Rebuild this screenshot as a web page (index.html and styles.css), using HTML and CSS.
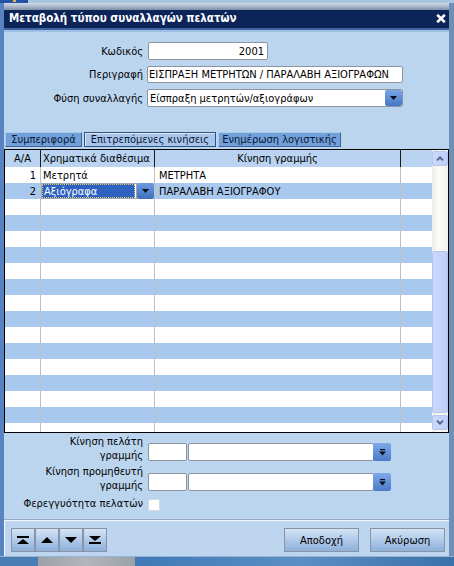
FILE: index.html
```html
<!DOCTYPE html>
<html lang="el">
<head>
<meta charset="utf-8">
<title>Μεταβολή τύπου συναλλαγών πελατών</title>
<link rel="stylesheet" href="styles.css">
</head>
<body>
<div class="screen">
  <div class="desk-top"><div class="dk"><span class="dot"></span></div></div>
  <div class="window">
    <div class="titlebar">
      <span class="title">Μεταβολή τύπου συναλλαγών πελατών</span>
      <svg class="close" width="10" height="9" viewBox="0 0 10 9"><path d="M1.2 0.8L8.8 8.2M8.8 0.8L1.2 8.2" stroke="#fff" stroke-width="2.6" fill="none"/></svg>
    </div>
    <div class="client">
      <div class="form">
        <span class="lbl">Κωδικός</span>
        <div class="box code">2001</div>
        <span class="lbl">Περιγραφή</span>
        <div class="box desc">ΕΙΣΠΡΑΞΗ ΜΕΤΡΗΤΩΝ / ΠΑΡΑΛΑΒΗ ΑΞΙΟΓΡΑΦΩΝ</div>
        <span class="lbl">Φύση συναλλαγής</span>
        <div class="box combo"><span class="txt">Είσπραξη μετρητών/αξιογράφων</span><span class="dd"><svg width="7" height="4" viewBox="0 0 7 4"><path d="M0 0H7L3.5 4Z" fill="#0a0f1e"/></svg></span></div>
      </div>

      <div class="tabs">
        <div class="tab t1">Συμπεριφορά</div>
        <div class="tab t2">Επιτρεπόμενες κινήσεις</div>
        <div class="tab t3">Ενημέρωση λογιστικής</div>
      </div>

      <div class="grid">
        <div class="gmain">
          <div class="ghead">
            <div class="c c1 center">Α/Α</div>
            <div class="c c2">Χρηματικά διαθέσιμα</div>
            <div class="c c3 center">Κίνηση γραμμής</div>
            <div class="c c4"></div>
          </div>
          <div class="gbody">
            <div class="grow"><div class="c c1">1</div><div class="c c2">Μετρητά</div><div class="c c3">ΜΕΤΡΗΤΑ</div><div class="c c4"></div></div>
            <div class="grow alt"><div class="c c1">2</div><div class="c c2 editing"><div class="editor"><span class="sel">Αξιόγραφα</span></div><span class="ebtn"><svg width="7" height="4" viewBox="0 0 7 4"><path d="M0 0H7L3.5 4Z" fill="#0a0f1e"/></svg></span></div><div class="c c3">ΠΑΡΑΛΑΒΗ ΑΞΙΟΓΡΑΦΟΥ</div><div class="c c4"></div></div>
            <div class="grow"><div class="c c1"></div><div class="c c2"></div><div class="c c3"></div><div class="c c4"></div></div>
            <div class="grow alt"><div class="c c1"></div><div class="c c2"></div><div class="c c3"></div><div class="c c4"></div></div>
            <div class="grow"><div class="c c1"></div><div class="c c2"></div><div class="c c3"></div><div class="c c4"></div></div>
            <div class="grow alt"><div class="c c1"></div><div class="c c2"></div><div class="c c3"></div><div class="c c4"></div></div>
            <div class="grow"><div class="c c1"></div><div class="c c2"></div><div class="c c3"></div><div class="c c4"></div></div>
            <div class="grow alt"><div class="c c1"></div><div class="c c2"></div><div class="c c3"></div><div class="c c4"></div></div>
            <div class="grow"><div class="c c1"></div><div class="c c2"></div><div class="c c3"></div><div class="c c4"></div></div>
            <div class="grow alt"><div class="c c1"></div><div class="c c2"></div><div class="c c3"></div><div class="c c4"></div></div>
            <div class="grow"><div class="c c1"></div><div class="c c2"></div><div class="c c3"></div><div class="c c4"></div></div>
            <div class="grow alt"><div class="c c1"></div><div class="c c2"></div><div class="c c3"></div><div class="c c4"></div></div>
            <div class="grow"><div class="c c1"></div><div class="c c2"></div><div class="c c3"></div><div class="c c4"></div></div>
            <div class="grow alt"><div class="c c1"></div><div class="c c2"></div><div class="c c3"></div><div class="c c4"></div></div>
            <div class="grow"><div class="c c1"></div><div class="c c2"></div><div class="c c3"></div><div class="c c4"></div></div>
            <div class="grow alt"><div class="c c1"></div><div class="c c2"></div><div class="c c3"></div><div class="c c4"></div></div>
            <div class="grow"><div class="c c1"></div><div class="c c2"></div><div class="c c3"></div><div class="c c4"></div></div>
          </div>
        </div>
        <div class="vscroll">
          <div class="sbtn up"><svg width="8" height="5" viewBox="0 0 8 5"><path d="M1 4.3L4 1.3L7 4.3" stroke="#4d6185" stroke-width="1.8" fill="none"/></svg></div>
          <div class="thumb"></div>
          <div class="sbtn down"><svg width="8" height="5" viewBox="0 0 8 5"><path d="M1 0.7L4 3.7L7 0.7" stroke="#4d6185" stroke-width="1.8" fill="none"/></svg></div>
        </div>
      </div>

      <div class="lower">
        <div class="lrow">
          <span class="lbl2">Κίνηση πελάτη<br>γραμμής</span>
          <div class="pick"><div class="box small"></div><div class="box big"></div><span class="dd2"><svg width="7" height="7" viewBox="0 0 7 7"><path d="M1 0H6V1.2H1Z M0 2.5H7L3.5 6.5Z" fill="#0a0f1e"/></svg></span></div>
        </div>
        <div class="lrow">
          <span class="lbl2">Κίνηση προμηθευτή<br>γραμμής</span>
          <div class="pick"><div class="box small"></div><div class="box big"></div><span class="dd2"><svg width="7" height="7" viewBox="0 0 7 7"><path d="M1 0H6V1.2H1Z M0 2.5H7L3.5 6.5Z" fill="#0a0f1e"/></svg></span></div>
        </div>
        <div class="lrow r3">
          <span class="lbl2">Φερεγγυότητα πελατών</span>
          <span class="check"></span>
        </div>
      </div>
    </div>
    <div class="footer">
      <div class="nav">
        <span class="nbtn"><svg width="12" height="8" viewBox="0 0 12 8"><path d="M0 0H12V2H0Z M6 3L12 8H0Z" fill="#000"/></svg></span>
        <span class="nbtn"><svg width="12" height="6" viewBox="0 0 12 6"><path d="M6 0L12 6H0Z" fill="#000"/></svg></span>
        <span class="nbtn"><svg width="12" height="6" viewBox="0 0 12 6"><path d="M0 0H12L6 6Z" fill="#000"/></svg></span>
        <span class="nbtn"><svg width="12" height="8" viewBox="0 0 12 8"><path d="M0 0H12L6 5Z M0 6H12V8H0Z" fill="#000"/></svg></span>
      </div>
      <div class="spacer"></div>
      <span class="btn">Αποδοχή</span>
      <span class="btn">Ακύρωση</span>
    </div>
  </div>
  <div class="desk-bottom"></div>
</div>
</body>
</html>
```

FILE: styles.css
```css
* { box-sizing: border-box; margin: 0; padding: 0; }
html, body { width: 454px; height: 566px; overflow: hidden; }
body {
  background: #6f8fb6;
  font-family: "DejaVu Sans Condensed", "DejaVu Sans", sans-serif;
  font-stretch: semi-condensed;
  font-size: 11px;
  line-height: 13px;
  color: #000;
}
.screen { display: flex; flex-direction: column; width: 454px; height: 566px; }

.desk-top { height: 3px; flex: none; display: flex; background: #a8c6e0; }
.desk-top .dk { width: 28px; background: #2452a6; display: flex; justify-content: center; }
.desk-top .dot { width: 3px; height: 2px; background: #e4b640; }

.window {
  flex: 1;
  min-height: 0;
  display: flex;
  flex-direction: column;
  border-left: 4px solid #5784c0;
  border-right: 5px solid #6f8fb6;
}

.titlebar {
  flex: none;
  height: 29px;
  display: flex;
  justify-content: space-between;
  align-items: center;
  padding: 7px 3px 6px 5px;
  color: #fff;
  background: linear-gradient(to bottom, #d5dbe4 0, #b0bccd 3px, #7f8ea8 7px, #0d2459 7px, #0d2459 25px, #3f66a3 25px, #3f66a3 27px, #9fc0e3 27px);
}
.title { font-weight: bold; font-size: 11.5px; letter-spacing: 0; white-space: nowrap; }
.close { display: block; }

.client { flex: 1; min-height: 0; display: flex; flex-direction: column; background: #bcd5ee; }

.form {
  display: grid;
  grid-template-columns: 139px auto;
  column-gap: 4px;
  row-gap: 6px;
  padding-top: 10px;
  align-items: center;
  justify-items: start;
}
.lbl { justify-self: end; white-space: nowrap; }
.box {
  background: #fff;
  border: 1px solid #8b949f;
  border-radius: 2px;
  display: flex;
  align-items: center;
  white-space: nowrap;
  overflow: hidden;
}
.code { width: 120px; height: 18px; margin-left: 1px; justify-content: flex-end; padding-right: 3px; }
.desc { width: 256px; height: 17px; padding-left: 1px; }
.combo { width: 256px; height: 18px; padding-left: 2px; }
.combo .txt { flex: 1; }
.dd {
  width: 17px;
  height: 100%;
  background: linear-gradient(#7aa5e6, #4677c6);
  border-radius: 2px;
  display: flex;
  align-items: center;
  justify-content: center;
}

.tabs { display: flex; gap: 2px; margin-top: 25px; padding-left: 1px; height: 15px; flex: none; }
.tab {
  height: 15px;
  display: flex;
  align-items: center;
  justify-content: center;
  background: #71a0da;
  border: 1px solid;
  border-color: #a9c9ef #3f6494 #3f6494 #a9c9ef;
  color: #0b1733;
  white-space: nowrap;
}
.t1 { width: 77px; }
.t2 { width: 132px; background: #a8c6ec; border-color: #34527e; box-shadow: inset 1px 1px #dbe8f8; }
.t3 { width: 123px; }

.grid { margin-top: 2px; height: 284px; flex: none; border: 1px solid #000; display: flex; }
.gmain { flex: 1; min-width: 0; display: flex; flex-direction: column; }
.ghead { height: 17px; flex: none; display: flex; background: #b9d3f0; }
.ghead .c { border-right-color: #1a1a1a; }
.ghead .c4 { border-right: none; }
.gbody { flex: 1; overflow: hidden; }
.grow { height: 16px; display: flex; background: #fff; }
.grow.alt { background: #a9c8ee; }
.c {
  height: 100%;
  border-right: 1px solid #c0c0c0;
  display: flex;
  align-items: center;
  white-space: nowrap;
  overflow: hidden;
}
.c1 { width: 36px; justify-content: flex-end; padding-right: 4px; }
.c2 { width: 114px; padding-left: 2px; }
.c3 { width: 246px; padding-left: 4px; }
.c4 { flex: 1; border-right: none; }
.c.center { justify-content: center; padding: 0; }

.c2.editing { padding: 0; }
.editor { flex: 1; height: 100%; border: 1px solid #9aa6b6; background: #fff; padding-right: 1px; display: flex; }
.sel {
  flex: 1;
  display: flex;
  align-items: center;
  padding-left: 2px;
  background: #2d62c0;
  color: #fff;
  outline: 1px dotted #e0c868;
  outline-offset: -1px;
}
.ebtn {
  width: 17px;
  height: 100%;
  background: linear-gradient(#6e9ae0, #3f6fbd);
  border-radius: 2px;
  display: flex;
  align-items: center;
  justify-content: center;
}

.vscroll {
  width: 16px;
  flex: none;
  display: flex;
  flex-direction: column;
  background: linear-gradient(to right, #eeede6, #fbfbf8 40%, #f2f1ea);
}
.sbtn {
  height: 15px;
  margin-top: 1px;
  border: 1px solid #b7c6ee;
  border-radius: 2px;
  background: linear-gradient(to right, #cbd9fd, #bccdf8);
  display: flex;
  align-items: center;
  justify-content: center;
}
.sbtn.down { margin-top: 2px; }
.thumb {
  height: 162px;
  margin-top: 85px;
  border: 1px solid #b4c4ee;
  border-radius: 2px;
  background: linear-gradient(to right, #ccd9fd, #bdcef9);
}

.lower { padding-top: 2px; display: flex; flex-direction: column; }
.lrow { display: grid; grid-template-columns: 139px auto; column-gap: 4px; align-items: start; justify-items: start; }
.lrow + .lrow { margin-top: 2px; }
.lrow.r3 { margin-top: 4px; }
.lbl2 { justify-self: end; text-align: right; line-height: 14px; white-space: nowrap; }
.pick { display: flex; margin-top: 8px; margin-left: 1px; }
.small { width: 39px; height: 18px; }
.big { width: 186px; height: 18px; margin-left: 1px; }
.dd2 {
  width: 18px;
  height: 18px;
  margin-left: -1px;
  background: linear-gradient(#7fa9e8, #4a7bc8);
  border-radius: 2px;
  display: flex;
  align-items: center;
  justify-content: center;
}
.check { width: 12px; height: 12px; margin: 2px 0 0 1px; background: #fff; border: 1px solid #d2dae4; }

.footer {
  flex: none;
  height: 37px;
  display: flex;
  align-items: flex-start;
  padding: 8px 4px 0 7px;
  background: #bdd5ee;
  border-top: 1px solid #99a8ba;
  box-shadow: inset 0 1px #f3f7fc, inset 1px 0 #f3f7fc;
}
.nav { display: flex; }
.nbtn, .btn {
  height: 24px;
  display: flex;
  align-items: center;
  justify-content: center;
  border: 1px solid #8794a8;
  background: linear-gradient(#d4e3f5, #a9c4e6 60%, #8fb0da);
}
.nbtn { width: 24px; }
.spacer { flex: 1; }
.btn { width: 75px; margin-left: 11px; color: #000; }

.desk-bottom {
  height: 10px;
  flex: none;
  background:
    linear-gradient(to bottom, #93b4d6 0, #93b4d6 1px, transparent 1px),
    linear-gradient(to right, #4a7db3 0, #4a7db3 38px, #9ca2a9 38px, #b2b5b9 86px, #9ca2a9 135px, #4079b5 135px, #5b8fc4 300px, #3c70a9 454px);
}
```
